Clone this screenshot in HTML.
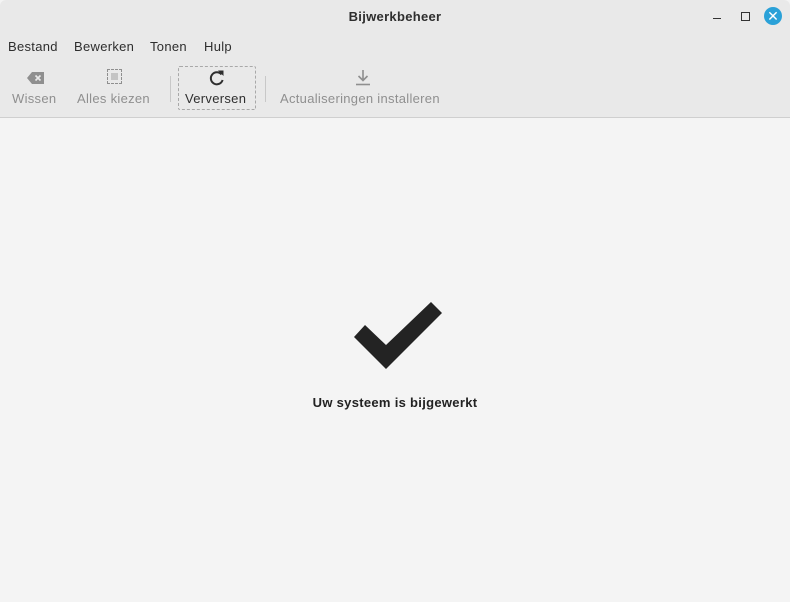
<!DOCTYPE html>
<html><head><meta charset="utf-8"><style>
*{margin:0;padding:0;box-sizing:border-box}
body{width:790px;height:602px;background:#f4f4f4;font-family:"Liberation Sans","DejaVu Sans",sans-serif;font-size:13px;color:#2e2e2e;position:relative;overflow:hidden;letter-spacing:0.3px}
.hdr{position:absolute;left:0;top:0;width:790px;height:118px;background:#e9e9e9;border-bottom:1px solid #cfcfcf;border-radius:6px 6px 0 0}
.t{position:absolute;top:9px;left:0;width:790px;text-align:center;font-weight:bold;font-size:13px}
.m{position:absolute;top:39px}
.tb{position:absolute;top:91px;color:#8f8f8f}
.sep{position:absolute;top:76px;width:1px;height:26px;background:#c8c8c8}
</style></head><body>
<div class="hdr">
<div class="t">Bijwerkbeheer</div>
<div style="position:absolute;left:713px;top:18px;width:8px;height:1px;background:#333"></div>
<div style="position:absolute;left:741px;top:12px;width:9px;height:9px;border:1.5px solid #333"></div>
<div style="position:absolute;left:764px;top:7px;width:18px;height:18px;border-radius:50%;background:#2aa1d8;color:#fff;font-weight:bold;font-size:14px;line-height:18px;text-align:center;letter-spacing:0">✕</div>
<div class="m" style="left:8px">Bestand</div>
<div class="m" style="left:74px">Bewerken</div>
<div class="m" style="left:150px">Tonen</div>
<div class="m" style="left:204px">Hulp</div>
<svg style="position:absolute;left:27px;top:72px" width="18" height="12"><path d="M5 0H17V12H5L0 6Z" fill="#8f8f8f"/><path d="M8.5 3.5L13.5 8.5M13.5 3.5L8.5 8.5" stroke="#e9e9e9" stroke-width="1.6"/></svg>
<div style="position:absolute;left:107px;top:69px;width:15px;height:15px;border:1.5px dashed #8f8f8f"><div style="margin:2.5px;width:7px;height:7px;background:#c4c4c4"></div></div>
<svg style="position:absolute;left:208px;top:69px" width="18" height="18"><path d="M13.5 5.5A6 6 0 1 0 14.6 11" fill="none" stroke="#2e2e2e" stroke-width="2"/><path d="M10 1.5L15.5 1.5L15.5 7Z" fill="#2e2e2e"/></svg>
<svg style="position:absolute;left:355px;top:69px" width="16" height="17"><path d="M8 1V11M3.5 7L8 11.5L12.5 7" fill="none" stroke="#8f8f8f" stroke-width="1.6"/><path d="M1 15.5H15" stroke="#8f8f8f" stroke-width="1.6"/></svg>
<div class="tb" style="left:12px">Wissen</div>
<div class="tb" style="left:77px">Alles kiezen</div>
<div class="sep" style="left:170px"></div>
<div style="position:absolute;left:178px;top:66px;width:78px;height:44px;border:1px dashed #a8a8a8;border-radius:2px"></div>
<div class="tb" style="left:185px;color:#2e2e2e">Verversen</div>
<div class="sep" style="left:265px"></div>
<div class="tb" style="left:280px">Actualiseringen installeren</div>
</div>
<svg style="position:absolute;left:0;top:0" width="790" height="602"><polygon points="354,337 365,325 386,345 431,302 442,313 386,369" fill="#232323"/></svg>
<div style="position:absolute;top:395px;left:0;width:790px;text-align:center;font-weight:bold;font-size:13px;color:#222">Uw systeem is bijgewerkt</div>
</body></html>
